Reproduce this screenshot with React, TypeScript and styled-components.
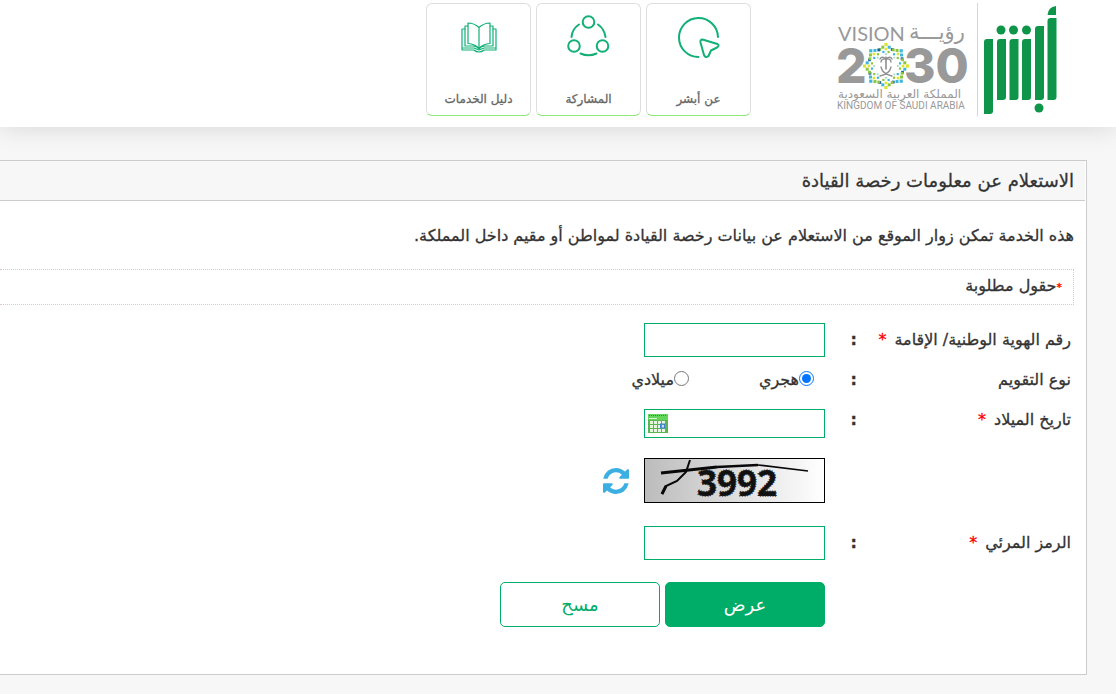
import React, { useState } from "react";
import styled, { createGlobalStyle } from "styled-components";

const GREEN = "#00ad68";
const ARABIC = '"DejaVu Sans", sans-serif';

const GlobalStyle = createGlobalStyle`
  *, *::before, *::after { box-sizing: border-box; }
  body {
    margin: 0;
    background: #f7f7f7;
    color: #333;
    font: 16px/22px ${ARABIC};
    -webkit-text-stroke: 0.3px;
    overflow-x: hidden;
  }
  button, input { font: inherit; }
`;

const Page = styled.div`
  min-height: 100vh;
  padding-bottom: 19px;
`;

const Header = styled.header`
  display: flex;
  align-items: flex-start;
  padding: 3px 59px 11px 16px;
  background: #fff;
  box-shadow: 0 2px 24px rgba(0, 0, 0, 0.12);
`;

const Brand = styled.a`
  display: flex;
  flex: none;
  height: 113px;
`;

const BrandDivider = styled.span`
  width: 1px;
  margin: 0 6px 0 8px;
  background: #d6d6d6;
`;

const Tiles = styled.nav`
  display: flex;
  gap: 5px;
  margin-right: 86px;
`;

const Tile = styled.a`
  display: flex;
  flex-direction: column;
  align-items: center;
  justify-content: space-between;
  width: 105px;
  height: 113px;
  padding: 10px 4px 6px;
  border: 1px solid #dedede;
  border-bottom-color: #8ee87a;
  border-radius: 6px;
  color: #666;
  font-size: 12px;
  line-height: 20px;
  text-decoration: none;
`;

const Panel = styled.main`
  margin: 33px 29px 0 0;
  border: 1px solid #ccc;
  border-left: 0;
  background: #fff;
`;

const PanelTitle = styled.h1`
  margin: 0 1px 0 0;
  padding: 0 11px;
  border-bottom: 1px solid #ccc;
  background: #f7f7f7;
  font-size: 18px;
  line-height: 39px;
  font-weight: normal;
`;

const Intro = styled.p`
  margin: 24px 12px 22px;
`;

const RequiredNote = styled.p`
  margin: 0 12px 0 0;
  padding: 5px 11px;
  border: 1px dotted #e3c4ce;
  border-left: 0;
`;

const Star = styled.span<{ $small?: boolean }>`
  color: #f00;
  font-size: ${(p) => (p.$small ? 11 : 16)}px;
  margin: 0 ${(p) => (p.$small ? 0 : 8)}px;
`;

const Form = styled.form`
  display: flex;
  flex-direction: column;
  padding: 18px 15px 47px;
`;

const Row = styled.div<{ $gap?: number; $top?: boolean }>`
  display: grid;
  grid-template-columns: 214px 32px 1fr;
  align-items: ${(p) => (p.$top ? "start" : "center")};
  min-height: 22px;
  margin-top: ${(p) => p.$gap ?? 0}px;
`;

const Field = styled.div`
  display: flex;
  align-items: center;
  grid-column: 3;
`;

const TextInput = styled.input`
  width: 181px;
  height: 34px;
  padding: 0 8px;
  border: 1px solid ${GREEN};
  background: #fff;
  outline: none;
`;

const DateBox = styled.div`
  display: flex;
  align-items: center;
  width: 181px;
  height: 29px;
  padding-left: 3px;
  border: 1px solid ${GREEN};
`;

const DateInput = styled.input`
  flex: 1;
  min-width: 0;
  height: 100%;
  border: 0;
  background: none;
  outline: none;
`;

const IconButton = styled.button`
  display: flex;
  padding: 0;
  border: 0;
  background: none;
  cursor: pointer;
`;

const Choice = styled.label`
  display: flex;
  align-items: center;
  width: 125px;
  margin: 0 11px 0 0;

  & + & { margin-right: 0; }
`;

const Radio = styled.input`
  width: 15px;
  height: 15px;
  margin: 0 0 3px;
`;

const CaptchaFrame = styled.div`
  display: flex;
  width: 181px;
  height: 45px;
  margin-left: 15px;
  border: 1px solid #000;

  svg { overflow: visible; }
`;

const Action = styled.button<{ $primary?: boolean }>`
  width: 160px;
  height: 45px;
  margin-left: 5px;
  padding: 0;
  border: 1px solid ${GREEN};
  border-radius: 5px;
  background: ${(p) => (p.$primary ? GREEN : "#fff")};
  color: ${(p) => (p.$primary ? "#fff" : GREEN)};
  font-size: 18px;
  -webkit-text-stroke: 0;
  cursor: pointer;
`;

const BLUE = "#1f5fa8";
const CYAN = "#3db7dc";
const LIME = "#8cc63f";
const YELLOW = "#dfe42e";

function Emblem() {
  const motif: [number, number, string, number][] = [
    [0, -21.5, YELLOW, 3.2],
    [-3.2, -18.8, LIME, 3],
    [3.2, -18.8, CYAN, 3],
    [0, -17, YELLOW, 2.6],
    [-2.6, -14, CYAN, 2.2],
    [2.6, -14, LIME, 2.2],
    [6.2, -16.5, BLUE, 2.8],
    [-6.2, -16.5, LIME, 2.8],
    [0, -11.8, "#a8d9c0", 1.8],
  ];
  return (
    <g transform="translate(49 63)">
      {[0, 45, 90, 135, 180, 225, 270, 315].map((angle, turn) => (
        <g key={angle} transform={`rotate(${angle})`}>
          {motif.map(([x, y, color, size], i) => {
            const shade = turn % 2 && i === 0 ? CYAN : color;
            return (
              <rect key={i} x={x - size / 2} y={y - size / 2} width={size} height={size} fill={shade}
                transform={`rotate(${-angle} ${x} ${y})`} />
            );
          })}
        </g>
      ))}
      <g fill="none" stroke="#8f8f8f" strokeLinecap="round">
        <path d="M0 3V-6" strokeWidth="1.6" />
        <path d="M0-6C-1-8-5-7-5-4M0-6C-2-10-5-9-6-7M0-6C1-8 5-7 5-4M0-6C2-10 5-9 6-7M0-9V-6" strokeWidth="1.4" />
        <path d="M-6 10C-1 9 4 6 5 1M6 10C1 9-4 6-5 1" strokeWidth="1.3" />
      </g>
    </g>
  );
}

function VisionLogo() {
  return (
    <svg width="132" height="113" viewBox="0 0 132 113" direction="ltr" fill="#999" role="img">
      <text x="1" y="38" fontFamily="Lato, sans-serif" fontSize="20">VISION</text>
      <text x="72" y="36" fontFamily="DejaVu Sans" fontSize="21">رؤيـــة</text>
      <g fontFamily="Inter, sans-serif" fontSize="48" fontWeight="800">
        <text x="-1" y="80">2</text>
        <text x="67" y="80">30</text>
      </g>
      <Emblem />
      <text x="1" y="95" fontFamily="DejaVu Sans" fontSize="12">المملكة العربية السعودية</text>
      <text x="0" y="106" fontFamily="Roboto, sans-serif" fontSize="10">KINGDOM OF SAUDI ARABIA</text>
    </svg>
  );
}

function bar(x: number, top: number, bottom: number) {
  return `M${x} ${top + 3}Q${x} ${top} ${x + 3} ${top}H${x + 9}V${bottom - 3}Q${x + 9} ${bottom} ${x + 6} ${bottom}H${x}Z`;
}

function AbsherLogo() {
  return (
    <svg width="73" height="113" viewBox="0 0 73 113" fill="#0f9549">
      <path d={bar(0, 36, 111)} />
      <path d={bar(13, 36, 97)} />
      <path d={bar(25.5, 36, 97)} />
      <path d={bar(38, 36, 97)} />
      <path d={bar(51, 23, 97)} />
      <path d={bar(63.5, 15, 97)} />
      <path d="M63.500 12Q64 4 72 3V12Z" />
      <circle cx="17" cy="27" r="4.500" />
      <circle cx="29.500" cy="27" r="4.500" />
      <circle cx="42.500" cy="27" r="4.500" />
      <circle cx="55" cy="105" r="4.500" />
    </svg>
  );
}

const TileSvg = styled.svg<{ $thin?: boolean }>`
  fill: none;
  stroke: #12b076;
  stroke-width: ${(p) => (p.$thin ? 1.2 : 2)};
  stroke-linecap: round;
  stroke-linejoin: round;
`;

function PointerIcon() {
  return (
    <TileSvg width="44" height="46" viewBox="0 0 44 46">
      <path d="M21.500 43A19.500 19.500 0 1 1 41 23" />
      <path d="M25.500 25.500Q23 25.500 23.500 28.500L27 41Q28.500 44.500 31.500 42L34 36.500L40 33.500Q43 31.500 40.500 30Z" />
    </TileSvg>
  );
}

function ShareIcon() {
  return (
    <TileSvg width="44" height="46" viewBox="0 0 44 46">
      <circle cx="21.500" cy="8" r="5.800" />
      <circle cx="7" cy="32" r="5.800" />
      <circle cx="35.500" cy="32" r="5.800" />
      <path d="M12 10.500Q5 15 4.500 23M31 10.500Q37.500 15 38.500 23M13.500 39.500Q21.500 43 29.500 39.500" />
    </TileSvg>
  );
}

function BookIcon() {
  return (
    <TileSvg $thin width="44" height="46" viewBox="0 0 44 46">
      <path d="M22 13.500Q17 9 11 9V29.500Q18 30 22 34.500Q26 30 33 29.500V9Q27 9 22 13.500ZM22 13.500V34" />
      <path d="M11 12H8V32H16Q20 32 22 35Q24 32 28 32H36V12H33" />
      <path d="M8 15H5V36H17Q19 38 22 38Q25 38 27 36H39V15H36M5 34H17L22 36L27 34H39" />
    </TileSvg>
  );
}

function CalendarIcon() {
  const xs = [2, 6, 10, 14];
  const ys = [8, 12, 16];
  return (
    <svg width="20" height="19" viewBox="0 0 20 19">
      <rect width="20" height="19" fill="#59b653" />
      <rect width="20" height="6" fill="#62d65a" />
      <path d="M1 1.500H19" stroke="#328b31" strokeDasharray="1 1" />
      <path d="M1 4.500H9" stroke="#d9f8d4" />
      {ys.map((y) => xs.map((x) => (
        <rect key={`${x}-${y}`} x={x} y={y - 1} width="3" height="3" fill={x === 14 && y === 12 ? "#bcdcff" : "#e5f7df"} />
      )))}
      <rect x="12.500" y="10" width="4" height="4" fill="none" stroke="#3f7fd6" />
    </svg>
  );
}

function CaptchaImage() {
  return (
    <svg width="179" height="43" viewBox="0 0 179 43" direction="ltr" role="img" aria-label="3992">
      <defs>
        <linearGradient id="captcha-bg">
          <stop offset="0" stopColor="#bcbcbc" />
          <stop offset="1" stopColor="#fff" />
        </linearGradient>
      </defs>
      <rect width="179" height="43" fill="url(#captcha-bg)" />
      <text x="52" y="37" fontFamily="Noto Sans, sans-serif" fontSize="35" fontWeight="700" fill="#111"
        stroke="#222" strokeWidth="1.5" strokeDasharray="1 1.5">3992</text>
      <g fill="none" stroke="#080808">
        <path d="M16 14L72 8" strokeWidth="3" />
        <path d="M72 8L113 6" strokeWidth="2.400" />
        <path d="M113 6L163 12" strokeWidth="1.700" />
        <path d="M45 1L41 13L32 22L21 27L17 35" strokeWidth="2" />
        <path d="M21 27L17 35" strokeWidth="3" />
      </g>
    </svg>
  );
}

function RefreshIcon() {
  return (
    <svg width="26" height="26" viewBox="0 0 1536 1536" fill="#3bafe2">
      <path d="M1511 928q0 5-1 7-64 268-268 434.500T764 1536q-146 0-282.500-55T238 1324l-129 129q-19 19-45 19t-45-19-19-45V960q0-26 19-45t45-19h448q26 0 45 19t19 45-19 45l-137 137q71 66 161 102t187 36q134 0 250-65t186-179q11-17 53-117 8-23 30-23h192q13 0 22.500 9.500t9.500 22.500zm25-800v448q0 26-19 45t-45 19h-448q-26 0-45-19t-19-45 19-45l138-138Q969 256 768 256q-134 0-250 65T332 500q-11 17-53 117-8 23-30 23H50q-13 0-22.500-9.500T18 608v-7q65-268 270-434.500T768 0q146 0 284 55.500T1297 212l130-129q19-19 45-19t45 19 19 45z" />
    </svg>
  );
}

const tiles = [
  { label: "عن أبشر", icon: <PointerIcon /> },
  { label: "المشاركة", icon: <ShareIcon /> },
  { label: "دليل الخدمات", icon: <BookIcon /> },
];

export default function App() {
  const [calendar, setCalendar] = useState("hijri");
  return (
    <Page dir="rtl" lang="ar">
      <GlobalStyle />
      <Header>
        <Brand href="#" aria-label="أبشر">
          <AbsherLogo />
          <BrandDivider />
          <VisionLogo />
        </Brand>
        <Tiles>
          {tiles.map((t) => (
            <Tile key={t.label} href="#">
              {t.icon}
              <span>{t.label}</span>
            </Tile>
          ))}
        </Tiles>
      </Header>

      <Panel>
        <PanelTitle>الاستعلام عن معلومات رخصة القيادة</PanelTitle>
        <Intro>هذه الخدمة تمكن زوار الموقع من الاستعلام عن بيانات رخصة القيادة لمواطن أو مقيم داخل المملكة.</Intro>
        <RequiredNote><Star $small>*</Star>حقول مطلوبة</RequiredNote>

        <Form onSubmit={(e) => e.preventDefault()}>
          <Row>
            <label htmlFor="national-id">رقم الهوية الوطنية/ الإقامة<Star>*</Star></label>
            <b>:</b>
            <Field><TextInput id="national-id" /></Field>
          </Row>
          <Row $gap={12} role="radiogroup" aria-labelledby="calendar-type">
            <span id="calendar-type">نوع التقويم</span>
            <b>:</b>
            <Field>
              <Choice>
                <Radio type="radio" name="calendar" checked={calendar === "hijri"} onChange={() => setCalendar("hijri")} />
                هجري
              </Choice>
              <Choice>
                <Radio type="radio" name="calendar" checked={calendar === "gregorian"} onChange={() => setCalendar("gregorian")} />
                ميلادي
              </Choice>
            </Field>
          </Row>
          <Row $gap={18} $top>
            <label htmlFor="birth-date">تاريخ الميلاد<Star>*</Star></label>
            <b>:</b>
            <Field>
              <DateBox>
                <DateInput id="birth-date" />
                <IconButton type="button" aria-label="التقويم"><CalendarIcon /></IconButton>
              </DateBox>
            </Field>
          </Row>
          <Row $gap={20}>
            <Field>
              <CaptchaFrame><CaptchaImage /></CaptchaFrame>
              <IconButton type="button" aria-label="تحديث"><RefreshIcon /></IconButton>
            </Field>
          </Row>
          <Row $gap={23}>
            <label htmlFor="visual-code">الرمز المرئي<Star>*</Star></label>
            <b>:</b>
            <Field><TextInput id="visual-code" /></Field>
          </Row>
          <Row $gap={22}>
            <Field>
              <Action type="submit" $primary>عرض</Action>
              <Action type="reset">مسح</Action>
            </Field>
          </Row>
        </Form>
      </Panel>
    </Page>
  );
}
